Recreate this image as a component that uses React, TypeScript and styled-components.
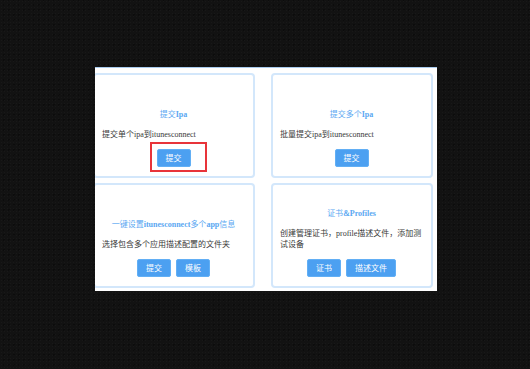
import React from 'react'
import styled, { createGlobalStyle } from 'styled-components'

const GlobalStyle = createGlobalStyle`
  html, body {
    margin: 0;
    padding: 0;
    background: #121212;
  }
  body {
    font-family: "Liberation Serif", "Noto Sans CJK SC", serif;
  }
`

const Stage = styled.div`
  width: 530px;
  height: 369px;
  box-sizing: border-box;
  padding: 67px 0 0 95px;
  background-color: #121212;
  background-image:
    radial-gradient(rgba(255, 255, 255, 0.025) 1px, transparent 1px),
    radial-gradient(rgba(0, 0, 0, 0.35) 1px, transparent 1px);
  background-size: 3px 3px, 5px 5px;
  background-position: 0 0, 1px 2px;
  overflow: hidden;
`

const Panel = styled.div`
  width: 342px;
  height: 224px;
  box-sizing: border-box;
  background: #fff;
  border-top: 1px solid #a9cbee;
  padding: 5px 4px 0 0;
  overflow: hidden;
`

const Grid = styled.div`
  margin-left: -2px;
  display: grid;
  grid-template-columns: 162px 162px;
  grid-auto-rows: 105px;
  column-gap: 16px;
  row-gap: 5px;
`

const Card = styled.div`
  box-sizing: border-box;
  border: 2px solid #d3e7fb;
  border-radius: 4px;
  padding: 0 8px 9px 7px;
  display: flex;
  flex-direction: column;
  justify-content: flex-end;
`

const Title = styled.div`
  color: #5ba8f2;
  font-size: 8px;
  line-height: 11px;
  text-align: center;
  margin-bottom: 9px;
  white-space: nowrap;
`

const Latin = styled.b`
  font-weight: bold;
`

const Desc = styled.div`
  color: #383838;
  font-size: 8px;
  line-height: 11px;
  margin-bottom: 9px;
`

const Actions = styled.div`
  display: flex;
  justify-content: center;
  gap: 5px;
`

const Marked = styled.span`
  position: relative;
  display: inline-flex;
`

const RedBox = styled.span`
  position: absolute;
  left: -7px;
  top: -7px;
  width: 57px;
  height: 30px;
  box-sizing: border-box;
  border: 2px solid #e8343a;
  pointer-events: none;
`

const Button = styled.button`
  height: 18px;
  box-sizing: border-box;
  padding: 0 8px;
  min-width: 32px;
  border: 1px solid #62aff5;
  border-radius: 2px;
  background: #4ca0f1;
  color: #fff;
  font-family: "Noto Sans CJK SC", sans-serif;
  font-size: 8px;
  line-height: 16px;
  cursor: pointer;
`

export default function App() {
  return (
    <>
      <GlobalStyle />
      <Stage>
        <Panel>
          <Grid>
            <Card>
              <Title>
                提交<Latin>Ipa</Latin>
              </Title>
              <Desc>提交单个ipa到itunesconnect</Desc>
              <Actions>
                <Marked>
                  <Button>提交</Button>
                  <RedBox />
                </Marked>
              </Actions>
            </Card>
            <Card>
              <Title>
                提交多个<Latin>Ipa</Latin>
              </Title>
              <Desc>批量提交ipa到itunesconnect</Desc>
              <Actions>
                <Button>提交</Button>
              </Actions>
            </Card>
            <Card>
              <Title>
                一键设置<Latin>itunesconnect</Latin>多个<Latin>app</Latin>信息
              </Title>
              <Desc>选择包含多个应用描述配置的文件夹</Desc>
              <Actions>
                <Button>提交</Button>
                <Button>模板</Button>
              </Actions>
            </Card>
            <Card>
              <Title>
                证书<Latin>&amp;Profiles</Latin>
              </Title>
              <Desc>创建管理证书，profile描述文件，添加测试设备</Desc>
              <Actions>
                <Button>证书</Button>
                <Button>描述文件</Button>
              </Actions>
            </Card>
          </Grid>
        </Panel>
      </Stage>
    </>
  )
}
